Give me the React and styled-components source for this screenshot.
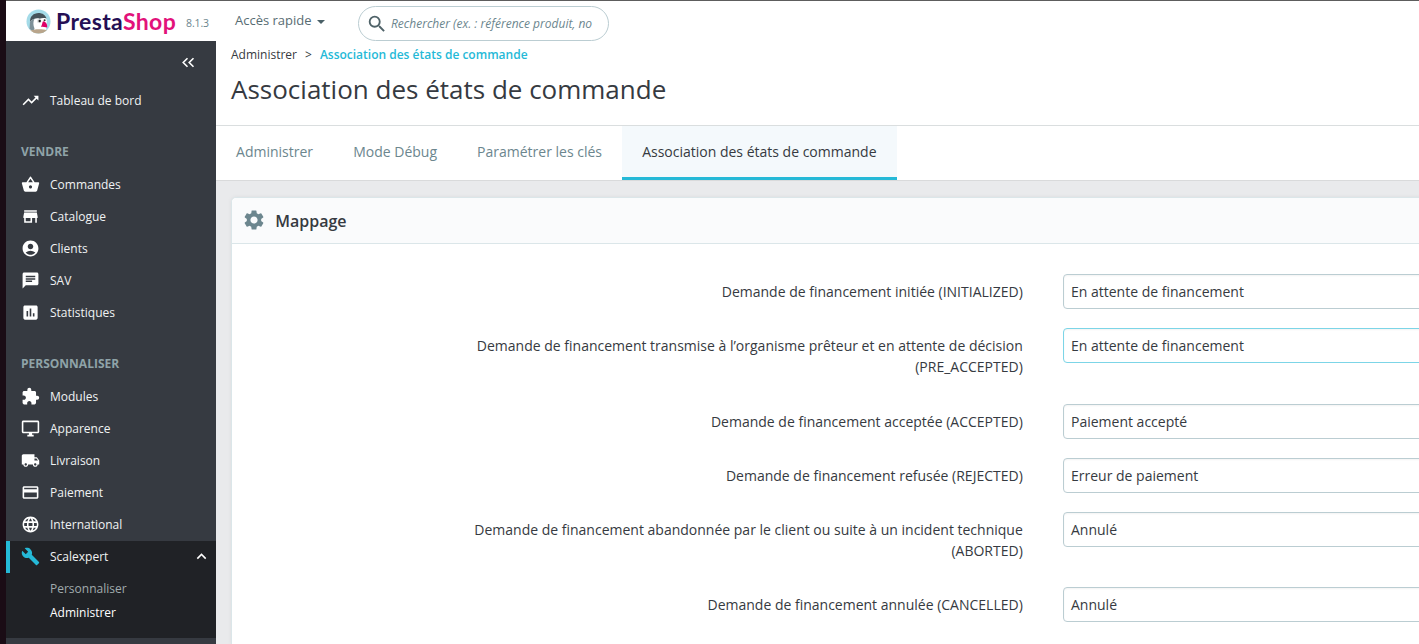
import React from "react";
import styled, { createGlobalStyle, css } from "styled-components";
import {
  MdTrendingUp, MdShoppingBasket, MdStore, MdAccountCircle, MdChat, MdAssessment,
  MdExtension, MdOutlineDesktopWindows, MdLocalShipping, MdPayment, MdLanguage, MdBuild,
  MdKeyboardArrowUp, MdSettings, MdSearch,
} from "react-icons/md";

const GlobalStyle = createGlobalStyle`
  *, *::before, *::after { box-sizing: border-box; }
  html, body { margin: 0; padding: 0; overflow: hidden; }
  body { font-family: "Open Sans", sans-serif; font-size: 14px; color: #363a41; background: #fff; }
`;

const Page = styled.div`
  display: grid;
  grid-template-columns: 6px 1fr;
  height: 644px;
  overflow: hidden;
`;
const DesktopEdge = styled.div`background: #1a0c15;`;
const Frame = styled.div`
  display: flex;
  flex-direction: column;
  min-width: 0;
  min-height: 0;
  border-top: 1px solid #5d5d5d;
`;
const Header = styled.header`
  display: flex;
  flex: none;
  height: 40px;
  background: #fff;
`;
const Brand = styled.div`
  display: flex;
  align-items: center;
  width: 210px;
  padding-left: 20px;
  svg { flex: none; }
`;
const Wordmark = styled.span`
  margin: 0 0 1px 5px;
  width: 121px;
  font: 700 23px/30px Lato, sans-serif;
  letter-spacing: 0.36px;
  color: #250f54;
  white-space: nowrap;
  b { color: #e2127a; font-weight: 700; }
`;
const Version = styled.span`
  margin: 4px 0 0 9px;
  font-size: 10.5px;
  letter-spacing: -0.1px;
  color: #6c868e;
`;
const QuickAccess = styled.div`
  display: flex;
  align-items: center;
  gap: 5px;
  width: 142px;
  height: 38px;
  padding-left: 19px;
  font-size: 13px;
  color: #576c72;
`;
const Caret = styled.span`
  margin-top: 4px;
  border: 4px solid transparent;
  border-top: 4px solid #4a6067;
  border-bottom: 0;
`;
const SearchBox = styled.div`
  display: flex;
  align-items: center;
  width: 251px;
  height: 35px;
  margin-top: 5px;
  padding: 0 14px 0 7px;
  border: 1px solid #bbcdd2;
  border-radius: 18px;
  color: #4f6268;
  span {
    flex: 1;
    margin-left: 3px;
    white-space: nowrap;
    font: italic 12px/20px "Open Sans", sans-serif;
    color: #6c868e;
  }
`;
const Body = styled.div`
  display: flex;
  flex: 1;
  min-height: 0;
`;
const Sidebar = styled.nav`
  flex: none;
  width: 210px;
  background: #363a41;
  font-size: 12px;
  overflow: hidden;
`;
const Collapse = styled.div`
  display: flex;
  justify-content: flex-end;
  height: 43px;
  padding: 16px 21px 0 0;
`;
const NavTitle = styled.div`
  height: 32px;
  margin-top: 20px;
  padding-left: 15px;
  line-height: 31px;
  font-weight: 700;
  color: #8fa3a8;
`;
const NavItem = styled.div`
  display: flex;
  align-items: center;
  height: 32px;
  padding: 0 5px 0 ${(p) => (p.$active ? "11px" : "15px")};
  color: #f0f2f3;
  > svg { flex: none; color: ${(p) => (p.$active ? "#25b9d7" : "#fff")}; }
  ${(p) => p.$active && css`
    padding-bottom: 2px;
    border-left: 4px solid #25b9d7;
  `}
`;
const NavLabel = styled.span`
  flex: 1;
  margin-left: 10px;
`;
const OpenGroup = styled.div`
  height: 97px;
  margin-top: 1px;
  background: #202226;
  ${NavItem} > svg:last-child { color: #fff; }
`;
const SubMenu = styled.div`padding: 3px 0 0 44px;`;
const SubItem = styled.div`
  height: 24px;
  line-height: 25px;
  color: ${(p) => (p.$active ? "#fff" : "#a0abad")};
`;
const Main = styled.main`
  display: flex;
  flex: 1;
  flex-direction: column;
  min-width: 0;
  background: #e9eaec;
`;
const TitleArea = styled.div`
  height: 85px;
  flex: none;
  padding: 5px 0 0 15px;
  background: #fff;
  border-bottom: 1px solid #dadedf;
`;
const Breadcrumb = styled.div`
  display: flex;
  gap: 8px;
  font-size: 12px;
  line-height: 18px;
  strong { font-weight: 600; color: #25b9d7; }
`;
const Heading = styled.h1`
  margin: 6px 0 0;
  font-size: 26px;
  font-weight: 400;
  line-height: 38px;
`;
const Tabs = styled.div`
  display: flex;
  flex: none;
  height: 55px;
  background: #fff;
  border-bottom: 1px solid #d9dadb;
`;
const Tab = styled.div`
  padding: 0 20.06px;
  line-height: 52px;
  white-space: nowrap;
  color: ${(p) => (p.$active ? "#363a41" : "#6c868e")};
  ${(p) => p.$active && css`
    padding-right: 20.4px;
    background: #f4f9fc;
    border-bottom: 3px solid #25b9d7;
  `}
`;
const Panel = styled.section`
  flex: 1;
  width: 1300px;
  margin: 16px 0 0 15px;
  background: #fff;
  border: 1px solid #dbe6e9;
  border-bottom: 0;
  border-radius: 5px 5px 0 0;
  box-shadow: 0 0 4px rgba(0, 0, 0, 0.06);
`;
const PanelHeader = styled.div`
  display: flex;
  align-items: center;
  height: 46px;
  padding-left: 10px;
  background: #fafbfc;
  border-bottom: 1px solid #dbe6e9;
  border-radius: 5px 5px 0 0;
  font-size: 16px;
  font-weight: 600;
  svg { margin: 0 9.2px 2px 0; color: #6c868e; }
`;
const Form = styled.div`padding-top: 30.2px;`;
const Field = styled.div`
  display: grid;
  grid-template-columns: 790.8px 500px;
  column-gap: 40.2px;
  align-items: start;
  margin-bottom: 19.2px;
`;
const Label = styled.label`
  padding: 7px 0;
  line-height: 21px;
  text-align: right;
  white-space: pre-line;
`;
const SelectBox = styled.div`
  height: 35px;
  padding-left: 7px;
  border: 1px solid ${(p) => (p.$focused ? "#7cd5e7" : "#bbcdd2")};
  border-radius: 4px;
  line-height: 33px;
  box-shadow: inset 0 1px 2px rgba(0, 0, 0, 0.05);
`;

const sections = [
  {
    title: "VENDRE",
    items: [
      [MdShoppingBasket, "Commandes"],
      [MdStore, "Catalogue"],
      [MdAccountCircle, "Clients"],
      [MdChat, "SAV"],
      [MdAssessment, "Statistiques"],
    ],
  },
  {
    title: "PERSONNALISER",
    items: [
      [MdExtension, "Modules"],
      [MdOutlineDesktopWindows, "Apparence"],
      [MdLocalShipping, "Livraison"],
      [MdPayment, "Paiement"],
      [MdLanguage, "International"],
    ],
  },
];

const fields = [
  ["Demande de financement initiée (INITIALIZED)", "En attente de financement"],
  ["Demande de financement transmise à l’organisme prêteur et en attente de décision\n(PRE_ACCEPTED)", "En attente de financement", true],
  ["Demande de financement acceptée (ACCEPTED)", "Paiement accepté"],
  ["Demande de financement refusée (REJECTED)", "Erreur de paiement"],
  ["Demande de financement abandonnée par le client ou suite à un incident technique\n(ABORTED)", "Annulé"],
  ["Demande de financement annulée (CANCELLED)", "Annulé"],
];

const Mascot = () => (
  <svg width="25" height="25" viewBox="0 0 25 25">
    <defs>
      <clipPath id="disc"><circle cx="12.5" cy="12.5" r="12" /></clipPath>
    </defs>
    <g clipPath="url(#disc)">
      <rect width="25" height="25" fill="#a4dbe8" />
      <path d="M4.500 24V12c0-4 3.500-7.500 8-7.500s8 3 8.300 7.500L20 22z" fill="#fff" />
      <path d="M4 12.500C4 7.500 7.500 4 12.500 4c4 0 7 2.200 8 5.500-2.500-.8-5-.5-7 .2-3-1-6 .2-9.500 2.800z" fill="#46535a" />
      <path d="M4 12.500c1.500-1.500 3-2.300 4.500-2.800-1.500 3-1.500 6.500 0 9.800l-1 3L3.500 20z" fill="#7c9098" />
      <circle cx="13.200" cy="12" r="2.300" fill="#dfe3e4" />
      <circle cx="13.700" cy="12" r="1.200" fill="#222" />
      <circle cx="18.600" cy="11.200" r="1" fill="#333" />
      <path d="M17 12.300c2.800.2 4.500 2.800 4.200 6.200-2-.8-4.200-.2-6.400-.8 1.500-1.500 1.200-3.700 2.200-5.400z" fill="#df0067" />
      <path d="M3 22c5-2.200 13-2.200 18-.8v4H3z" fill="#b9a58b" />
    </g>
  </svg>
);

const DoubleChevron = () => (
  <svg width="14" height="11" viewBox="0 0 14 11" fill="none" stroke="#fff" strokeWidth="1.600">
    <path d="M6.500 1.200 2.200 5.500l4.300 4.300M12.500 1.200 8.200 5.500l4.300 4.300" />
  </svg>
);

export default function App() {
  return (
    <Page>
      <GlobalStyle />
      <DesktopEdge />
      <Frame>
        <Header>
          <Brand>
            <Mascot />
            <Wordmark>Presta<b>Shop</b></Wordmark>
            <Version>8.1.3</Version>
          </Brand>
          <QuickAccess>Accès rapide<Caret /></QuickAccess>
          <SearchBox>
            <MdSearch size={22} />
            <span>Rechercher (ex. : référence produit, no</span>
          </SearchBox>
        </Header>
        <Body>
          <Sidebar>
            <Collapse><DoubleChevron /></Collapse>
            <NavItem><MdTrendingUp size={19} /><NavLabel>Tableau de bord</NavLabel></NavItem>
            {sections.map((s) => (
              <React.Fragment key={s.title}>
                <NavTitle>{s.title}</NavTitle>
                {s.items.map(([Icon, label]) => (
                  <NavItem key={label}><Icon size={19} /><NavLabel>{label}</NavLabel></NavItem>
                ))}
              </React.Fragment>
            ))}
            <OpenGroup>
              <NavItem $active>
                <MdBuild size={19} /><NavLabel>Scalexpert</NavLabel><MdKeyboardArrowUp size={19} />
              </NavItem>
              <SubMenu>
                <SubItem>Personnaliser</SubItem>
                <SubItem $active>Administrer</SubItem>
              </SubMenu>
            </OpenGroup>
          </Sidebar>
          <Main>
            <TitleArea>
              <Breadcrumb><span>Administrer</span><span>&gt;</span><strong>Association des états de commande</strong></Breadcrumb>
              <Heading>Association des états de commande</Heading>
            </TitleArea>
            <Tabs>
              <Tab>Administrer</Tab>
              <Tab>Mode Débug</Tab>
              <Tab>Paramétrer les clés</Tab>
              <Tab $active>Association des états de commande</Tab>
            </Tabs>
            <Panel>
              <PanelHeader><MdSettings size={24} />Mappage</PanelHeader>
              <Form>
                {fields.map(([label, value, focused]) => (
                  <Field key={label}>
                    <Label>{label}</Label>
                    <SelectBox $focused={focused}>{value}</SelectBox>
                  </Field>
                ))}
              </Form>
            </Panel>
          </Main>
        </Body>
      </Frame>
    </Page>
  );
}
